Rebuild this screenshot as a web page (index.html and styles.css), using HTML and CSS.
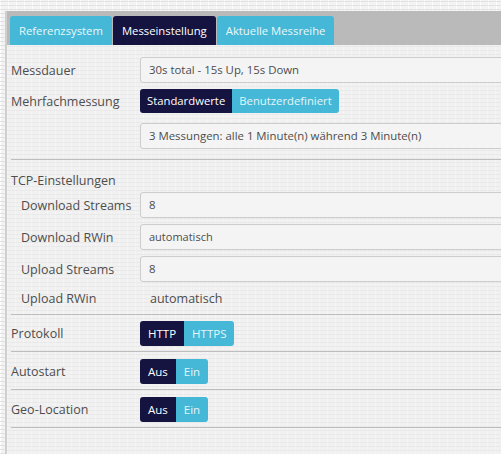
FILE: index.html
```html
<!DOCTYPE html>
<html lang="de">

<head>
	<meta charset="UTF-8">
	<meta name="viewport" content="width=device-width, initial-scale=1.0">
	<title>Messeinstellung</title>
	<link rel="stylesheet" href="styles.css">
</head>

<body>
	<div class="panel">
		<div class="tab-bar">
			<div class="tab">Referenzsystem</div>
			<div class="tab active">Messeinstellung</div>
			<div class="tab">Aktuelle Messreihe</div>
		</div>
		<div class="content">
			<div class="row">
				<div class="label">Messdauer</div>
				<div class="field">30s total - 15s Up, 15s Down</div>
			</div>
			<div class="row row-buttons">
				<div class="label">Mehrfachmessung</div>
				<div class="btn-group">
					<span class="btn on">Standardwerte</span>
					<span class="btn">Benutzerdefiniert</span>
				</div>
			</div>
			<div class="row row-extra">
				<div class="label"></div>
				<div class="field">3 Messungen: alle 1 Minute(n) während 3 Minute(n)</div>
			</div>

			<div class="section">
				<div class="section-title">TCP-Einstellungen</div>
				<div class="row">
					<div class="label sub">Download Streams</div>
					<div class="field">8</div>
				</div>
				<div class="row">
					<div class="label sub">Download RWin</div>
					<div class="field small">automatisch</div>
				</div>
				<div class="row">
					<div class="label sub">Upload Streams</div>
					<div class="field">8</div>
				</div>
				<div class="row row-plain">
					<div class="label sub">Upload RWin</div>
					<div class="plain">automatisch</div>
				</div>
			</div>

			<div class="row toggle-row first">
				<div class="label">Protokoll</div>
				<div class="btn-group">
					<span class="btn on">HTTP</span>
					<span class="btn">HTTPS</span>
				</div>
			</div>
			<div class="row toggle-row">
				<div class="label">Autostart</div>
				<div class="btn-group">
					<span class="btn on">Aus</span>
					<span class="btn">Ein</span>
				</div>
			</div>
			<div class="row toggle-row">
				<div class="label">Geo-Location</div>
				<div class="btn-group">
					<span class="btn on">Aus</span>
					<span class="btn">Ein</span>
				</div>
			</div>
		</div>
	</div>
</body>

</html>
```

FILE: styles.css
```css
* {
	margin: 0;
	padding: 0;
	box-sizing: border-box;
}

html,
body {
	overflow: hidden;
}

body {
	font-family: "Open Sans", "Liberation Sans", sans-serif;
	font-size: 12.5px;
	color: #4d4d4d;
	height: 454px;
	padding: 11px 0 0 5px;
	background-color: #f3f3f3;
	background-image:
		repeating-linear-gradient(0deg, #e2e2e2 0 1px, transparent 1px 4px),
		repeating-linear-gradient(90deg, #ffffff 0 1px, transparent 1px 8px);
}

.panel {
	width: 620px;
	height: 460px;
	border-left: 2px solid #cfcfcf;
	background-color: #f1f1f1;
	background-image:
		repeating-linear-gradient(0deg, #e9e9e9 0 1px, transparent 1px 4px),
		repeating-linear-gradient(90deg, #f6f6f6 0 1px, transparent 1px 8px);
}

.tab-bar {
	display: flex;
	gap: 1px;
	height: 34px;
	padding: 5px 0 0 3px;
	background: #bababa;
}

.tab {
	height: 29px;
	padding: 0 9px;
	line-height: 30px;
	font-size: 11.3px;
	color: #eaf7fb;
	background: #44b8d6;
	border-radius: 3px 3px 0 0;
}

.tab.active {
	background: #15133f;
	color: #fff;
}

.content {
	padding: 12px 0 0 4px;
}

.row {
	display: flex;
	align-items: center;
	min-height: 26px;
	margin-bottom: 6px;
}

.label {
	width: 129px;
	flex-shrink: 0;
}

.label.sub {
	padding-left: 10px;
}

.field {
	flex: 1;
	height: 26px;
	padding: 0 8px;
	line-height: 24px;
	font-size: 11.4px;
	border: 1px solid #cdcdcd;
	border-radius: 3px;
	background: #f4f4f4;
}

.field.small {
	font-size: 11px;
}

.row-buttons {
	min-height: 24px;
}

.row-extra {
	margin: 10px 0 0;
	padding-bottom: 10px;
	border-bottom: 1px solid #bdbdbd;
}

.section {
	padding-top: 11px;
	border-bottom: 1px solid #bdbdbd;
}

.section-title {
	line-height: 20px;
	margin-bottom: 1px;
}

.row-plain {
	min-height: 20px;
	margin-bottom: 6px;
}

.plain {
	padding-left: 10px;
	font-size: 12.5px;
}

.btn-group {
	display: flex;
	border-radius: 3px;
	overflow: hidden;
}

.btn {
	height: 24px;
	padding: 0 7px;
	line-height: 24px;
	font-size: 11.3px;
	color: #e6f5fa;
	background: #44b8d6;
}

.btn.on {
	background: #15133f;
	color: #fff;
}

.toggle-row {
	margin: 0;
	padding: 7px 0 5px;
	border-bottom: 1px solid #bdbdbd;
}

.toggle-row.first {
	padding-top: 6px;
}

.toggle-row .btn {
	height: 25px;
	padding: 0 8px;
	line-height: 25px;
	font-size: 11.5px;
}
```
